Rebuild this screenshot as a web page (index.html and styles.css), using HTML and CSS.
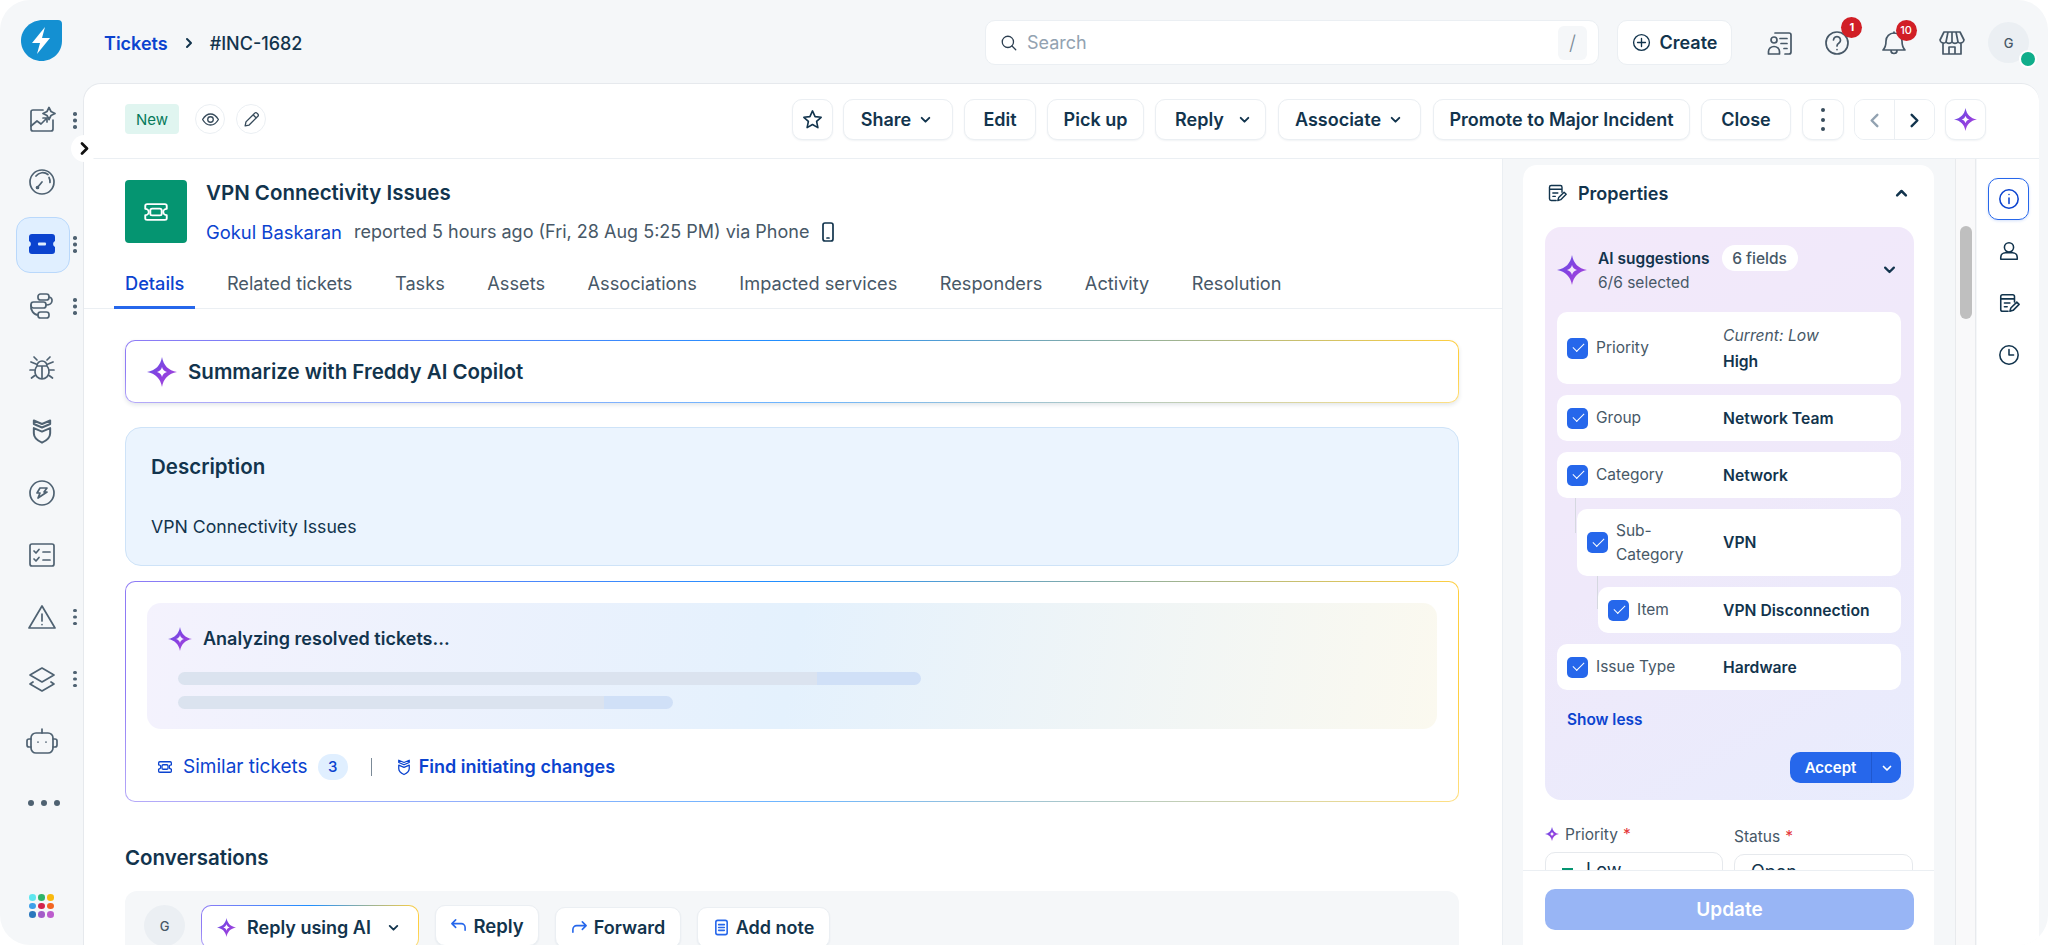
FILE: index.html
```html
<!DOCTYPE html>
<html>

<head>
    <meta http-equiv="content-type" content="text/html; charset=UTF-8">
    <title>#INC-1682 - VPN Connectivity Issues</title>
    <link rel="stylesheet" href="styles.css">
</head>

<body>
    <svg class="defs" width="0" height="0">
        <defs>
            <linearGradient id="spark" x1="0" y1="0" x2="1" y2="1">
                <stop offset="0" stop-color="#5b5be6" />
                <stop offset="0.5" stop-color="#8a3fe0" />
                <stop offset="1" stop-color="#b04fd8" />
            </linearGradient>
            <symbol id="sparkle" viewBox="0 0 30 30">
                <path fill="url(#spark)" fill-rule="evenodd" d="M15 0C16.500 8.500 21.500 13.500 30 15 21.500 16.500 16.500 21.500 15 30 13.500 21.500 8.500 16.500 0 15 8.500 13.500 13.500 8.500 15 0ZM15 10C14.500 12.500 12.500 14.500 10 15 12.500 15.500 14.500 17.500 15 20 15.500 17.500 17.500 15.500 20 15 17.500 14.500 15.500 12.500 15 10Z" />
            </symbol>
            <symbol id="ticket" viewBox="0 0 24 24">
                <path d="M5 5h14a1.500 1.500 0 0 1 1.500 1.500v2.700a2.800 2.800 0 0 0 0 5.600v2.700A1.500 1.500 0 0 1 19 19H5a1.500 1.500 0 0 1-1.500-1.500v-2.700a2.800 2.800 0 0 0 0-5.600V6.500A1.500 1.500 0 0 1 5 5Z" />
                <rect x="8" y="9" width="8" height="6" rx="1.500" />
            </symbol>
            <symbol id="shield" viewBox="0 0 24 24">
                <path d="M5 3l7 3 7-3v3l-7 3-7-3ZM5 9.500l7 3 7-3V14c0 4-3.500 6.500-7 8-3.500-1.500-7-4-7-8Z" />
            </symbol>
            <symbol id="notes" viewBox="0 0 24 24">
                <path d="M18 11V5a2 2 0 0 0-2-2H5a2 2 0 0 0-2 2v14a2 2 0 0 0 2 2h6M3 7.500h15M7 12h6M7 16h3" />
                <path d="M13 21l1-3.500 6.500-6.500 2.500 2.500L16.500 20Z" />
            </symbol>
            <symbol id="down" viewBox="0 0 12 12">
                <path d="M2.500 4.500 6 8l3.500-3.500" />
            </symbol>
        </defs>
    </svg>

    <div class="app">
        <header class="topbar">
            <svg class="logo" viewBox="0 0 41 41">
                <path fill="#1490d2" d="M22 0h15a4 4 0 0 1 4 4v17C41 32 32 41 20.500 41S0 32 0 20.500 10 0 22 0Z" />
                <path fill="#fff" d="M24 7 11 23h8l-3 11 13-16h-8Z" />
            </svg>
            <nav class="crumbs">
                <a class="crumb-link">Tickets</a>
                <svg class="ic crumb-sep" viewBox="0 0 12 12"><path d="M4 2l4 4-4 4" /></svg>
                <span>#INC-1682</span>
            </nav>
            <div class="search">
                <svg class="ic search-ic" viewBox="0 0 24 24"><circle cx="10.500" cy="10.500" r="7.500" /><path d="M16 16l5 5" /></svg>
                <span class="search-text">Search</span>
                <span class="slash">/</span>
            </div>
            <button class="create">
                <svg class="ic" viewBox="0 0 24 24"><circle cx="12" cy="12" r="10" /><path d="M12 7v10M7 12h10" /></svg>
                Create
            </button>
            <div class="top-icons">
                <span class="top-ic">
                    <svg class="ic" viewBox="0 0 28 28"><path d="M9 4h14a2 2 0 0 1 2 2v17a2 2 0 0 1-2 2h-4M14 9.500h7M15 14.500h6M18 19.500h3" /><circle cx="8" cy="11" r="3" /><path d="M2.500 25v-2.500a5.500 5 0 0 1 11 0V25Z" /></svg>
                </span>
                <span class="top-ic">
                    <svg class="ic" viewBox="0 0 28 28"><circle cx="14" cy="14" r="11" /><path d="M10.500 11a3.500 3.500 0 1 1 5.500 3c-1.200.8-2 1.500-2 3" /><path d="M14 20.500v.1" /></svg>
                    <b class="count count-help">1</b>
                </span>
                <span class="top-ic">
                    <svg class="ic" viewBox="0 0 28 28"><path d="M3 21c2-2 3-4 3-9a8 8 0 0 1 16 0c0 5 1 7 3 9ZM11 21.500a3 3 0 0 0 6 0" /><path d="M14 3v1" /></svg>
                    <b class="count count-bell">10</b>
                </span>
                <span class="top-ic">
                    <svg class="ic" viewBox="0 0 28 28"><path d="M6 3h16l4 8a3.500 3.500 0 0 1-6 2 4 4 0 0 1-6 0 4 4 0 0 1-6 0 3.500 3.500 0 0 1-6-2ZM10 3 8 13M18 3l2 10M14 3v10M5 15v10h18V15M11 25v-7h6v7" /></svg>
                </span>
                <span class="avatar top-avatar">G<i class="online"></i></span>
            </div>
        </header>

        <aside class="sidenav">
            <a class="nav-item has-more"><svg class="ic" viewBox="0 0 28 28"><path d="M15 4H5a2 2 0 0 0-2 2v17a2 2 0 0 0 2 2h18a2 2 0 0 0 2-2v-9" /><path d="M3 20l6-5 4 3 6-6M15 12h4v4" /><path d="M21 1.500l2 4 4 2-4 2-2 4-2-4-4-2 4-2Z" /></svg></a>
            <a class="nav-item"><svg class="ic" viewBox="0 0 28 28"><circle cx="14" cy="14" r="12" /><path d="M8 8a8.500 8.500 0 0 1 12-1.500M21 9.500a9 9 0 0 1 1 5" /><path d="M9 20l5-6" /><circle cx="9.500" cy="19.500" r="1" /></svg></a>
            <a class="nav-item is-active has-more">
                <svg viewBox="0 0 28 24"><path fill="#0b43cf" d="M4 2h20a3 3 0 0 1 3 3v4a3.300 3.300 0 0 0 0 6v4a3 3 0 0 1-3 3H4a3 3 0 0 1-3-3v-4a3.300 3.300 0 0 0 0-6V5a3 3 0 0 1 3-3Z" /><rect fill="#e0efff" x="10" y="10.500" width="8" height="3" rx="1" /></svg>
            </a>
            <a class="nav-item has-more"><svg class="ic" viewBox="0 0 28 28"><rect x="10" y="2" width="11" height="6" rx="2.500" /><rect x="3" y="10" width="15" height="6" rx="2.500" /><rect x="10" y="20" width="11" height="6" rx="2.500" /><path d="M21 5c4 0 5 8-3 8M3 13c-1 5 3 10 7 10" /></svg></a>
            <a class="nav-item"><svg class="ic" viewBox="0 0 28 28"><path d="M9 12a5 5 0 0 1 10 0c2 2 2 5 2 6a7 7 0 0 1-14 0c0-1 0-4 2-6ZM9 12h10M14 12v13M9 6 6 3M19 6l3-3M7 16H2M21 16h5M7.500 21l-4 3M20.500 21l4 3M8 10 3 8M20 10l5-2" /></svg></a>
            <a class="nav-item"><svg class="ic" viewBox="0 0 24 24"><use href="#shield" /></svg></a>
            <a class="nav-item"><svg class="ic" viewBox="0 0 28 28"><circle cx="14" cy="14" r="12" /><path d="M12 9h7l-3 4h3l-9 6 2-5H9Z" /></svg></a>
            <a class="nav-item"><svg class="ic" viewBox="0 0 28 28"><rect x="2" y="3" width="24" height="22" rx="2" /><path d="M6 10l2 2 3-3.500M6 18l2 2 3-3.500M15 11h7M15 19h7" /></svg></a>
            <a class="nav-item has-more"><svg class="ic nav-wide" viewBox="0 0 30 28"><path d="M15 3 28 25H2ZM15 11v7M15 21.500v.1" /></svg></a>
            <a class="nav-item has-more"><svg class="ic" viewBox="0 0 28 28"><path d="M14 3 26 10l-12 7L2 10ZM5 17l-3 2 12 7 12-7-3-2" /></svg></a>
            <a class="nav-item"><svg class="ic nav-bot" viewBox="0 0 34 28"><rect x="6" y="6" width="22" height="20" rx="5" /><path d="M17 6V2M6 12H4a2 2 0 0 0-2 2v4a2 2 0 0 0 2 2h2M28 12h2a2 2 0 0 1 2 2v4a2 2 0 0 1-2 2h-2" /><path d="M13 15v.1M21 15v.1" /></svg></a>
            <a class="nav-item"><span class="dots-row"><i></i><i></i><i></i></span></a>
            <div class="app-grid">
                <i class="c1"></i><i class="c2"></i><i class="c3"></i>
                <i class="c4"></i><i class="c5"></i><i class="c6"></i>
                <i class="c7"></i><i class="c8"></i><i class="c9"></i>
            </div>
        </aside>

        <div class="panel">
            <button class="collapse"><svg class="ic" viewBox="0 0 12 12"><path d="M4 2l4 4-4 4" /></svg></button>

            <div class="toolbar">
                <span class="badge-new">New</span>
                <button class="round-btn"><svg class="ic" viewBox="0 0 24 24"><path d="M2 12c3-5 6-7 10-7s7 2 10 7c-3 5-6 7-10 7s-7-2-10-7Z" /><circle cx="12" cy="12" r="3.500" /></svg></button>
                <button class="round-btn"><svg class="ic" viewBox="0 0 24 24"><path d="M4 20l1-5L16 4a2 2 0 0 1 3 0l1 1a2 2 0 0 1 0 3L9 19ZM14 6l4 4" /></svg></button>

                <div class="actions">
                    <button class="btn btn-icon w-star"><svg class="ic" viewBox="0 0 24 24"><path d="M12 3l2.700 6 6.300.7-4.700 4.300 1.300 6.500-5.600-3.300-5.600 3.300L7.700 14 3 9.700 9.300 9Z" /></svg></button>
                    <button class="btn w-share">Share <svg class="ic btn-down" viewBox="0 0 12 12"><use href="#down" /></svg></button>
                    <button class="btn w-edit">Edit</button>
                    <button class="btn w-pick">Pick up</button>
                    <button class="btn w-reply">Reply <svg class="ic btn-down" viewBox="0 0 12 12"><use href="#down" /></svg></button>
                    <button class="btn w-assoc">Associate <svg class="ic btn-down" viewBox="0 0 12 12"><use href="#down" /></svg></button>
                    <button class="btn w-promote">Promote to Major Incident</button>
                    <button class="btn w-close">Close</button>
                    <button class="btn w-more"><span class="kebab"><i></i><i></i><i></i></span></button>
                    <div class="pager">
                        <button class="is-off"><svg class="ic" viewBox="0 0 12 12"><path d="M8 2 4 6l4 4" /></svg></button>
                        <button><svg class="ic" viewBox="0 0 12 12"><path d="M4 2l4 4-4 4" /></svg></button>
                    </div>
                    <button class="btn w-spark"><svg viewBox="0 0 30 30"><use href="#sparkle" /></svg></button>
                </div>
            </div>

            <div class="panel-body">
                <main class="main">
                    <section class="ticket-head">
                        <span class="ticket-icon">
                            <svg class="ic" viewBox="2.500 4 19 16" preserveAspectRatio="none">
                                <path d="M5 5h14a1.500 1.500 0 0 1 1.500 1.500v2.700a2.800 2.800 0 0 0 0 5.600v2.700A1.500 1.500 0 0 1 19 19H5a1.500 1.500 0 0 1-1.500-1.500v-2.700a2.800 2.800 0 0 0 0-5.600V6.500A1.500 1.500 0 0 1 5 5Z" />
                                <rect x="7.500" y="9" width="9" height="6" rx="1.500" />
                            </svg>
                        </span>
                        <div>
                            <h1>VPN Connectivity Issues</h1>
                            <p class="reported">
                                <a>Gokul Baskaran</a>
                                <span>reported 5 hours ago (Fri, 28 Aug 5:25 PM) via Phone</span>
                                <svg class="ic" viewBox="0 0 16 20"><rect x="3" y="1" width="10" height="18" rx="2" /><path d="M7 16h2" /></svg>
                            </p>
                        </div>
                    </section>

                    <ul class="tabs">
                        <li class="is-current">Details</li>
                        <li>Related tickets</li>
                        <li>Tasks</li>
                        <li>Assets</li>
                        <li>Associations</li>
                        <li>Impacted services</li>
                        <li>Responders</li>
                        <li>Activity</li>
                        <li>Resolution</li>
                    </ul>

                    <div class="summary grad-border">
                        <svg class="spark-md" viewBox="0 0 30 30"><use href="#sparkle" /></svg>
                        Summarize with Freddy AI Copilot
                    </div>

                    <section class="description">
                        <h2>Description</h2>
                        <p>VPN Connectivity Issues</p>
                    </section>

                    <section class="analyze grad-border">
                        <div class="analyze-inner">
                            <div class="analyze-title">
                                <svg viewBox="0 0 30 30"><use href="#sparkle" /></svg>
                                Analyzing resolved tickets...
                            </div>
                            <div class="skeleton sk-long"></div>
                            <div class="skeleton sk-short"></div>
                        </div>
                        <div class="analyze-links">
                            <svg class="ic" viewBox="0 0 24 24"><use href="#ticket" /></svg>
                            <a class="similar">Similar tickets</a>
                            <span class="pill-count">3</span>
                            <i class="sep"></i>
                            <svg class="ic" viewBox="0 0 24 24"><use href="#shield" /></svg>
                            <a class="find">Find initiating changes</a>
                        </div>
                    </section>

                    <h2 class="conv-title">Conversations</h2>
                    <div class="reply-box">
                        <span class="avatar">G</span>
                        <button class="reply-ai grad-border">
                            <svg viewBox="0 0 30 30"><use href="#sparkle" /></svg>
                            Reply using AI
                            <svg class="ic reply-ai-down" viewBox="0 0 12 12"><use href="#down" /></svg>
                        </button>
                        <button class="btn reply-btn w-r1"><svg class="ic" viewBox="0 0 18 18"><path d="M6 3 2 7l4 4M2 7h10a4 4 0 0 1 4 4v3" /></svg>Reply</button>
                        <button class="btn reply-btn w-r2"><svg class="ic" viewBox="0 0 18 18"><path d="M12 3l4 4-4 4M16 7H6a4 4 0 0 0-4 4v3" /></svg>Forward</button>
                        <button class="btn reply-btn w-r3"><svg class="ic" viewBox="0 0 18 18"><rect x="3" y="1.500" width="12" height="15" rx="2" /><path d="M6 6h6M6 9h6M6 12h6" /></svg>Add note</button>
                    </div>
                </main>

                <section class="props">
                    <div class="props-card">
                        <div class="props-scroll">
                            <div class="props-head">
                                <svg class="ic" viewBox="0 0 24 24"><use href="#notes" /></svg>
                                <h3>Properties</h3>
                                <svg class="ic props-up" viewBox="0 0 12 12"><path d="M2.500 7.500 6 4l3.500 3.500" /></svg>
                            </div>

                            <div class="ai-box">
                                <div class="ai-head">
                                    <svg class="ai-spark" viewBox="0 0 30 30"><use href="#sparkle" /></svg>
                                    <div class="ai-head-text">
                                        <div class="ai-head-line"><b>AI suggestions</b><span class="fields-pill">6 fields</span></div>
                                        <div class="ai-selected">6/6 selected</div>
                                    </div>
                                    <svg class="ic ai-down" viewBox="0 0 12 12"><use href="#down" /></svg>
                                </div>

                                <div class="sg-list">
                                    <div class="sg-row sg-tall">
                                        <span class="check"></span><span class="sg-label">Priority</span>
                                        <div class="sg-value"><em>Current: Low</em><b>High</b></div>
                                    </div>
                                    <div class="sg-row">
                                        <span class="check"></span><span class="sg-label">Group</span>
                                        <div class="sg-value"><b>Network Team</b></div>
                                    </div>
                                    <div class="sg-row">
                                        <span class="check"></span><span class="sg-label">Category</span>
                                        <div class="sg-value"><b>Network</b></div>
                                    </div>
                                    <div class="sg-row sg-sub">
                                        <span class="check"></span><span class="sg-label">Sub-<br>Category</span>
                                        <div class="sg-value"><b>VPN</b></div>
                                    </div>
                                    <div class="sg-row sg-item">
                                        <span class="check"></span><span class="sg-label">Item</span>
                                        <div class="sg-value"><b>VPN Disconnection</b></div>
                                    </div>
                                    <div class="sg-row">
                                        <span class="check"></span><span class="sg-label">Issue Type</span>
                                        <div class="sg-value"><b>Hardware</b></div>
                                    </div>
                                </div>

                                <a class="show-less">Show less</a>
                                <div class="accept-row">
                                    <div class="accept">
                                        <span>Accept</span>
                                        <i><svg class="ic" viewBox="0 0 12 12"><use href="#down" /></svg></i>
                                    </div>
                                </div>
                            </div>

                            <div class="fields">
                                <div class="field">
                                    <label><svg viewBox="0 0 30 30"><use href="#sparkle" /></svg>Priority <s>*</s></label>
                                    <div class="select"><i class="prio-dot"></i>Low<svg class="ic" viewBox="0 0 12 12"><use href="#down" /></svg></div>
                                </div>
                                <div class="field field-status">
                                    <label>Status <s>*</s></label>
                                    <div class="select">Open</div>
                                </div>
                            </div>
                        </div>
                        <div class="props-foot"><button class="update">Update</button></div>
                    </div>
                    <div class="track"><i class="thumb"></i></div>
                </section>

                <aside class="rail">
                    <a class="rail-btn is-on"><svg class="ic" viewBox="0 0 24 24"><circle cx="12" cy="12" r="10" /><path d="M12 11v6M12 7v.1" /></svg></a>
                    <a class="rail-btn"><svg class="ic" viewBox="0 0 24 24"><circle cx="12" cy="8" r="5" /><path d="M3 21v-2a5 5 0 0 1 5-5h8a5 5 0 0 1 5 5v2Z" /></svg></a>
                    <a class="rail-btn"><svg class="ic" viewBox="0 0 24 24"><use href="#notes" /></svg></a>
                    <a class="rail-btn"><svg class="ic" viewBox="0 0 24 24"><circle cx="12" cy="12" r="10" /><path d="M12 6v6h5" /></svg></a>
                </aside>
            </div>
        </div>
    </div>
</body>

</html>
```

FILE: styles.css
```css
* {
    box-sizing: border-box;
}

html,
body {
    margin: 0;
    height: 945px;
    overflow: hidden;
    background: #fff;
}

body {
    font-family: Inter, "Noto Sans", sans-serif;
    color: #12344d;
    font-size: 17px;
}

h1,
h2,
h3,
p,
ul {
    margin: 0;
    padding: 0;
}

button {
    font-family: inherit;
    color: inherit;
    cursor: pointer;
}

.defs {
    display: block;
    height: 0;
}

.ic {
    fill: none;
    stroke: currentColor;
    stroke-width: 1.7;
    stroke-linecap: round;
    stroke-linejoin: round;
}

.app {
    width: 2048px;
    height: 945px;
    background: #f5f7f9;
    border-radius: 30px;
    overflow: hidden;
    display: grid;
    grid-template-columns: 83px 1956px;
    grid-template-rows: 83px 862px;
}

/* top bar */
.topbar {
    grid-column: 1 / -1;
    display: flex;
    align-items: center;
    padding: 2px 0 0 21px;
}

.logo {
    width: 41px;
    height: 41px;
    margin-top: -4px;
    flex: none;
    margin-right: 42px;
}

.crumbs {
    width: 881px;
    flex: none;
    display: flex;
    align-items: center;
    font-weight: 500;
    font-size: 18px;
    margin-top: 1px;
}

.crumb-link {
    color: #0b43cf;
    font-weight: 600;
}

.crumb-sep {
    width: 12px;
    height: 12px;
    margin: 0 15px;
    stroke-width: 2;
}

.search {
    width: 614px;
    height: 45px;
    flex: none;
    background: #fff;
    border: 1px solid #ebeff3;
    border-radius: 10px;
    display: flex;
    align-items: center;
    padding: 0 11px 0 14px;
}

.search-ic {
    width: 18px;
    height: 18px;
    color: #2c3e50;
}

.search-text {
    flex: 1;
    margin-left: 9px;
    color: #92a2b1;
    font-size: 18px;
}

.slash {
    width: 29px;
    height: 34px;
    background: #f5f7f9;
    border-radius: 6px;
    display: flex;
    align-items: center;
    justify-content: center;
    color: #7b8a97;
    font-size: 20px;
    font-weight: 300;
}

.create {
    width: 115px;
    height: 45px;
    flex: none;
    margin-left: 18px;
    background: #fff;
    border: 1px solid #ebeff3;
    border-radius: 10px;
    display: flex;
    align-items: center;
    justify-content: center;
    gap: 9px;
    font-size: 18px;
    font-weight: 600;
}

.create svg {
    width: 19px;
    height: 19px;
}

.top-icons {
    display: flex;
    align-items: center;
    margin-left: 19px;
    flex: none;
}

.top-ic {
    position: relative;
    width: 57.300px;
    height: 28px;
    display: flex;
    justify-content: center;
    color: #475867;
}

.top-ic svg {
    width: 28px;
    height: 28px;
}

.count {
    position: absolute;
    height: 21px;
    min-width: 21px;
    border-radius: 11px;
    background: #d11f26;
    color: #fff;
    font-size: 11px;
    font-weight: 500;
    display: flex;
    align-items: center;
    justify-content: center;
}

.count-help {
    left: 33px;
    top: -12px;
    font-weight: 700;
}

.count-bell {
    left: 30px;
    top: -9px;
}

.avatar {
    width: 41px;
    height: 41px;
    border-radius: 50%;
    background: #ebeff3;
    color: #475867;
    font-size: 13px;
    font-weight: 500;
    display: flex;
    align-items: center;
    justify-content: center;
    flex: none;
    position: relative;
}

.top-avatar {
    margin-left: 8px;
}

.online {
    position: absolute;
    right: -8px;
    bottom: -5px;
    width: 18px;
    height: 18px;
    border-radius: 50%;
    background: #10ae8b;
    border: 2px solid #fff;
}

/* left nav */
.sidenav {
    display: flex;
    flex-direction: column;
    padding-top: 6px;
}

.nav-item {
    position: relative;
    height: 62.100px;
    flex: none;
    display: flex;
    align-items: center;
    padding-left: 28px;
    color: #4f6272;
}

.nav-item svg {
    width: 28px;
    height: 28px;
}

.nav-item .nav-wide {
    width: 30px;
    margin-left: -1px;
}

.nav-item .nav-bot {
    width: 34px;
    height: 30px;
    margin-left: -3px;
}

.nav-item.has-more::after {
    content: "";
    position: absolute;
    left: 73px;
    top: 50%;
    width: 3.500px;
    height: 3.500px;
    margin-top: -8px;
    border-radius: 50%;
    background: #4f6272;
    box-shadow: 0 6.500px 0 #4f6272, 0 13px 0 #4f6272;
}

.is-active::before {
    content: "";
    position: absolute;
    left: 16px;
    top: 4px;
    width: 52px;
    height: 54px;
    background: #e0efff;
    border: 1px solid #b9d8fb;
    border-radius: 14px;
}

.is-active svg {
    position: relative;
}

.dots-row {
    display: flex;
    gap: 7px;
}

.dots-row i {
    width: 6px;
    height: 6px;
    border-radius: 50%;
    background: #4f6272;
}

.app-grid {
    margin: 60px 0 0 29px;
    width: 25px;
    display: grid;
    grid-template-columns: repeat(3, 7px);
    gap: 2px;
}

.app-grid i {
    height: 6.500px;
    border-radius: 50%;
}

.c1 { background: #5ee6ef; }
.c2 { background: #2fb46a; }
.c3 { background: #f9b90e; }
.c4 { background: #3e9fe8; }
.c5 { background: #d3234c; }
.c6 { background: #f26522; }
.c7 { background: #2a77bd; }
.c8 { background: #a35cc8; }
.c9 { background: #bc5ccd; }

/* main panel */
.panel {
    position: relative;
    background: #fff;
    border-top: 1px solid #e6e9ed;
    border-left: 1px solid #e6e9ed;
    border-radius: 18px 18px 0 0;
    display: flex;
    flex-direction: column;
    min-height: 0;
}

.collapse {
    position: absolute;
    left: -13px;
    top: 51px;
    width: 27px;
    height: 27px;
    padding: 6px;
    border: 0;
    border-radius: 50%;
    background: #fff;
    color: #111;
    z-index: 2;
    display: flex;
}

.collapse svg {
    stroke-width: 2.200;
}

.toolbar {
    height: 75px;
    flex: none;
    display: flex;
    align-items: flex-start;
    padding: 20px 53px 0 41px;
    border-bottom: 1px solid #ebeff3;
}

.badge-new {
    width: 54px;
    height: 30px;
    background: #e0f5f0;
    color: #067a5b;
    border-radius: 4px;
    font-size: 15px;
    display: flex;
    align-items: center;
    justify-content: center;
    margin-right: 16px;
}

.round-btn {
    width: 30px;
    height: 30px;
    padding: 0;
    border: 1px solid #ebeff3;
    border-radius: 50%;
    background: #fff;
    margin-right: 11px;
    display: flex;
    align-items: center;
    justify-content: center;
    color: #384c5c;
}

.round-btn svg {
    width: 19px;
    height: 19px;
}

.actions {
    display: flex;
    gap: 11px;
    margin-left: auto;
    margin-top: -5px;
}

.btn {
    height: 41px;
    padding: 0;
    background: #fff;
    border: 1px solid #ebeff3;
    border-radius: 10px;
    box-shadow: 0 1px 2px rgba(18, 52, 77, .06);
    font-size: 18px;
    font-weight: 600;
    display: flex;
    align-items: center;
    justify-content: center;
}

.btn-down {
    width: 13px;
    height: 13px;
    margin-left: 8px;
    stroke-width: 1.800;
}

.btn-icon svg {
    width: 23px;
    height: 23px;
}

.w-star { width: 41px; }
.w-share { width: 110px; margin-left: -1px; padding-right: 3px; }
.w-edit { width: 72px; }
.w-pick { width: 97px; }
.w-reply { width: 111px; gap: 6px; padding-left: 5px; }
.w-assoc { width: 143px; margin-left: 1px; padding-right: 2px; }
.w-promote { width: 257px; margin-left: 1px; }
.w-close { width: 90px; }
.w-more { width: 42px; }
.w-spark { width: 41px; margin-left: -1px; }

.w-spark svg {
    width: 23px;
    height: 23px;
}

.kebab {
    display: flex;
    flex-direction: column;
    gap: 5.500px;
}

.kebab i {
    width: 4px;
    height: 4px;
    border-radius: 50%;
    background: #384c5c;
}

.pager {
    width: 81px;
    height: 41px;
    margin-left: -1px;
    border: 1px solid #ebeff3;
    border-radius: 10px;
    display: flex;
    overflow: hidden;
}

.pager button {
    flex: 1;
    border: 0;
    background: #fff;
    padding: 12px 11px;
}

.pager button + button {
    border-left: 1px solid #ebeff3;
}

.pager .is-off {
    color: #92a2b1;
}

.pager svg {
    width: 17px;
    height: 17px;
    stroke-width: 1.700;
}

.panel-body {
    flex: 1;
    min-height: 0;
    display: flex;
}

/* ticket column */
.main {
    width: 1418px;
    flex: none;
    padding: 0 43px 0 41px;
    overflow: hidden;
}

.ticket-head {
    display: flex;
    gap: 19px;
    padding-top: 21px;
    height: 128px;
}

.ticket-icon {
    width: 62px;
    height: 63px;
    background: #059571;
    border-radius: 4px;
    color: #fff;
    display: flex;
    align-items: center;
    justify-content: center;
}

.ticket-icon svg {
    width: 24px;
    height: 18px;
    stroke-width: 1.500;
}

h1 {
    font-size: 20.500px;
    font-weight: 600;
    line-height: 26px;
}

.reported {
    margin-top: 13px;
    display: flex;
    align-items: center;
    font-size: 18px;
    line-height: 26px;
    color: #475867;
}

.reported a {
    color: #0b43cf;
    font-size: 18.400px;
    margin-right: 12px;
}

.reported svg {
    width: 18px;
    height: 20px;
    margin-left: 10px;
    color: #12344d;
}

.tabs {
    list-style: none;
    display: flex;
    height: 51px;
    margin: -29px -43px 0 -41px;
    padding-left: 30px;
    border-bottom: 1px solid #ebeff3;
    font-size: 18.200px;
    color: #475867;
    gap: 20.500px;
}

.tabs li {
    padding: 0 11px;
    height: 50px;
    display: flex;
    align-items: center;
    position: relative;
}

.tabs .is-current {
    color: #0b43cf;
    font-weight: 500;
}

.tabs .is-current::after {
    content: "";
    position: absolute;
    left: 0;
    right: 0;
    bottom: -1px;
    height: 3px;
    background: #2667eb;
}

.grad-border {
    border: 1.500px solid transparent;
    background:
        linear-gradient(#fff, #fff) padding-box,
        linear-gradient(180deg, transparent 50%, rgba(255, 255, 255, .35)) border-box,
        linear-gradient(90deg, #8f7bf5 0, #1f8fff 50%, #ffcf40 100%) border-box;
}

.summary {
    margin-top: 31px;
    height: 63px;
    border-radius: 10px;
    box-shadow: 0 2px 4px rgba(18, 52, 77, .12);
    display: flex;
    align-items: center;
    gap: 11px;
    padding-left: 21px;
    font-size: 20.500px;
    font-weight: 600;
}

.spark-md {
    width: 30px;
    height: 30px;
}

.description {
    margin-top: 24px;
    height: 139px;
    background: #ebf4fe;
    border: 1px solid #cee3f8;
    border-radius: 16px;
    padding: 26px 25px 0;
}

h2 {
    font-size: 20.500px;
    font-weight: 600;
    line-height: 26px;
}

.description p {
    margin-top: 34px;
    font-size: 17.700px;
    line-height: 26px;
}

.analyze {
    margin-top: 15px;
    height: 221px;
    border-radius: 10px;
    padding: 20.500px 21px 0;
}

.analyze-inner {
    height: 126px;
    border-radius: 14px;
    background: linear-gradient(100deg, #f4f2fd 0, #e4f1fd 50%, #fbf9ef 100%);
    padding: 23px 31px 0 21px;
}

.analyze-title {
    display: flex;
    align-items: center;
    gap: 11px;
    font-size: 18px;
    font-weight: 600;
    height: 26px;
    margin-bottom: 20px;
}

.analyze-title svg {
    width: 24px;
    height: 24px;
}

.skeleton {
    height: 13px;
    margin: 0 0 11px 10px;
    border-radius: 7px;
}

.sk-long {
    width: 743px;
    background: linear-gradient(90deg, #dbe3ef 86%, #d0e0f7 86%);
}

.sk-short {
    width: 495px;
    background: linear-gradient(90deg, #dbe3ef 86%, #d0e0f7 86%);
}

.analyze-links {
    display: flex;
    align-items: center;
    height: 26px;
    margin-top: 25px;
    padding-left: 9px;
    color: #0b43cf;
    font-size: 18px;
}

.analyze-links svg {
    width: 18px;
    height: 18px;
}

.similar {
    margin-left: 9px;
    font-size: 19px;
}

.pill-count {
    width: 30px;
    height: 26px;
    margin-left: 10px;
    border-radius: 13px;
    background: #e0efff;
    display: flex;
    align-items: center;
    justify-content: center;
    font-size: 15px;
    font-weight: 500;
}

.sep {
    width: 1px;
    height: 18px;
    background: #7b8a97;
    margin: 0 23px;
}

.find {
    margin-left: 6px;
    font-weight: 600;
}

.conv-title {
    margin-top: 43px;
}

.reply-box {
    margin-top: 20px;
    height: 80px;
    background: #f5f7f9;
    border-radius: 12px;
    display: flex;
    align-items: flex-start;
    padding: 14px 0 0 19px;
}

.reply-ai {
    width: 218px;
    height: 44px;
    margin-left: 16px;
    padding: 0 0 0 15px;
    border-radius: 10px;
    font-size: 18px;
    font-weight: 600;
    display: flex;
    align-items: center;
    gap: 11px;
}

.reply-ai > svg:first-child {
    width: 19px;
    height: 19px;
}

.reply-ai-down {
    width: 13px;
    height: 13px;
    margin-left: 5px;
}

.reply-btn {
    gap: 6px;
    margin-left: 16px;
}

.reply-btn svg {
    width: 17px;
    height: 17px;
    color: #2667eb;
}

.w-r1 { width: 104px; font-size: 18.500px; }
.w-r2 { width: 126px; margin-top: 2px; }
.w-r3 { width: 133px; margin-top: 2px; }

/* properties column */
.props {
    width: 475px;
    flex: none;
    display: flex;
    background: #f5f7f9;
    border-left: 1px solid #ebeff3;
    padding: 6px 0 0 20px;
}

.props-card {
    width: 411px;
    flex: none;
    background: #fff;
    border-radius: 14px 14px 0 0;
    display: flex;
    flex-direction: column;
    min-height: 0;
}

.props-scroll {
    flex: 1;
    overflow: hidden;
    padding: 0 21px 0 22px;
    min-height: 0;
}

.props-head {
    height: 62px;
    padding: 0 0 6px 2px;
    display: flex;
    align-items: center;
    gap: 11px;
    color: #12344d;
}

.props-head svg {
    width: 20px;
    height: 20px;
}

h3 {
    font-size: 18px;
    font-weight: 600;
    flex: 1;
}

.props-up {
    width: 15px !important;
    height: 15px !important;
    margin-right: 4px;
    stroke-width: 2;
}

.ai-box {
    width: 369px;
    height: 573px;
    border-radius: 16px;
    background: linear-gradient(150deg, #f3e9fa 0, #efe9fa 50%, #e8ecfd 100%);
    padding: 0 13px 0 12px;
}

.ai-head {
    height: 85px;
    display: flex;
    align-items: center;
    gap: 11px;
}

.ai-spark {
    width: 30px;
    height: 30px;
    flex: none;
}

.ai-head-text {
    flex: 1;
    margin-top: -2px;
}

.ai-head-line {
    display: flex;
    align-items: center;
    gap: 12px;
    font-size: 15.500px;
}

.ai-head-line b {
    font-weight: 600;
}

.fields-pill {
    width: 76px;
    height: 26px;
    border-radius: 13px;
    background: #fff;
    color: #475867;
    display: flex;
    align-items: center;
    justify-content: center;
    font-weight: 500;
    font-size: 15.500px;
}

.ai-selected {
    margin-top: 2px;
    font-size: 15.500px;
    color: #475867;
}

.ai-down {
    width: 15px;
    height: 15px;
    margin-right: 4px;
    stroke-width: 1.800;
}

.sg-list {
    display: flex;
    flex-direction: column;
    gap: 11px;
}

.sg-row {
    position: relative;
    height: 46px;
    background: #fff;
    border-radius: 10px;
    display: flex;
    align-items: center;
    padding-left: 10px;
    font-size: 15.500px;
    color: #475867;
}

.sg-tall {
    height: 72px;
}

.sg-sub {
    height: 67px;
    margin-left: 20px;
}

.sg-item {
    margin-left: 41px;
}

.sg-sub::before,
.sg-item::before {
    content: "";
    position: absolute;
    width: 1px;
    background: #d5d8e0;
}

.sg-sub::before {
    left: -2px;
    top: -11px;
    height: 35px;
}

.sg-item::before {
    left: -1px;
    top: -11px;
    height: 33px;
}

.check {
    width: 21px;
    height: 21px;
    flex: none;
    border-radius: 5px;
    background: #2667eb;
    position: relative;
    margin-right: 8px;
}

.check::after {
    content: "";
    position: absolute;
    left: 5.500px;
    top: 5.500px;
    width: 10px;
    height: 5px;
    border-left: 1.800px solid #fff;
    border-bottom: 1.800px solid #fff;
    transform: rotate(-45deg);
}

.sg-label {
    flex: 1;
    line-height: 24px;
}

.sg-value {
    width: 178px;
    flex: none;
    display: flex;
    flex-direction: column;
    gap: 7px;
    font-size: 15.700px;
    color: #12344d;
}

.sg-value b {
    font-weight: 600;
}

.sg-value em {
    color: #475867;
}

.show-less {
    display: block;
    margin: 18px 0 0 10px;
    color: #0b43cf;
    font-weight: 600;
    font-size: 15.400px;
    line-height: 24px;
}

.accept-row {
    display: flex;
    justify-content: flex-end;
    margin-top: 20px;
}

.accept {
    width: 111px;
    height: 31px;
    background: #2667eb;
    color: #fff;
    border-radius: 10px;
    display: flex;
    align-items: center;
    font-size: 15px;
    font-weight: 600;
}

.accept span {
    width: 81px;
    text-align: center;
}

.accept i {
    flex: 1;
    height: 100%;
    border-left: 1px solid #1f58cf;
    display: flex;
    align-items: center;
    justify-content: center;
}

.accept svg {
    width: 12px;
    height: 12px;
}

.fields {
    display: grid;
    grid-template-columns: 178px 179px;
    gap: 11px;
    margin-top: 23px;
}

.field label {
    display: flex;
    align-items: center;
    height: 22px;
    font-size: 15.500px;
    color: #475867;
    margin-bottom: 7px;
}

.field label svg {
    width: 14px;
    height: 14px;
    margin-right: 6px;
}

.field s {
    color: #e43538;
    text-decoration: none;
    margin-left: 5px;
}

.field-status {
    margin-top: 2px;
}

.select {
    height: 44px;
    border: 1px solid #e6e9ed;
    border-radius: 10px;
    display: flex;
    align-items: flex-start;
    padding: 5px 0 0 16px;
    font-size: 18px;
    line-height: 24px;
    position: relative;
}

.select svg {
    position: absolute;
    right: 7px;
    top: 15px;
    width: 13px;
    height: 13px;
    color: #7b8a97;
}

.prio-dot {
    width: 11px;
    height: 11px;
    background: #059571;
    margin: 10px 13px 0 0;
}

.props-foot {
    height: 75px;
    flex: none;
    border-top: 1px solid #ebeff3;
    background: #fff;
    padding: 18px 20px 0 22px;
}

.update {
    width: 369px;
    height: 41px;
    border: 0;
    border-radius: 10px;
    background: #98b5f5;
    color: #fff;
    font-size: 19px;
    font-weight: 600;
}

.track {
    width: 21px;
    margin-left: 21px;
    margin-top: -6px;
    flex: none;
    background: #f9f9fa;
    border-left: 1px solid #e8eaed;
    border-right: 1px solid #e8eaed;
    padding: 67px 0 0 4px;
}

.thumb {
    display: block;
    width: 12px;
    height: 93px;
    border-radius: 6px;
    background: #bfbfbf;
}

/* right rail */
.rail {
    width: 62px;
    flex: none;
    display: flex;
    flex-direction: column;
    align-items: center;
    padding: 19px 10px 0 11px;
    gap: 10px;
    background: #fff;
}

.rail-btn {
    width: 41px;
    height: 42px;
    display: flex;
    align-items: center;
    justify-content: center;
    color: #12344d;
}

.rail-btn svg {
    width: 22px;
    height: 22px;
}

.rail-btn.is-on {
    color: #0b43cf;
    border: 1px solid #2667eb;
    border-radius: 10px;
    box-shadow: 0 1px 3px rgba(38, 103, 235, .2);
}
```
